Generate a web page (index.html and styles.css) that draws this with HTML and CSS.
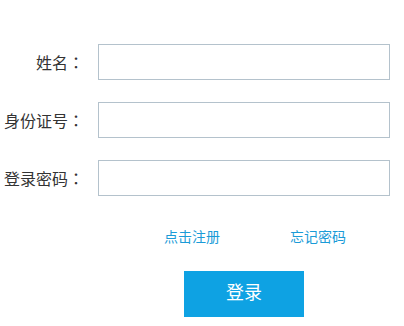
FILE: index.html
```html
<!DOCTYPE HTML>
<html>
	<head>
		<meta charset='utf-8' />
		<title>登录</title>
		<link rel="stylesheet" href="styles.css">
	</head>
	<body>
		<div class='loginForm'>
			<div class='row'>
				<label class='label'>姓名<span class='colon'>：</span></label>
				<input class='field' type='text'>
			</div>
			<div class='row'>
				<label class='label'>身份证号<span class='colon'>：</span></label>
				<input class='field' type='text'>
			</div>
			<div class='row'>
				<label class='label'>登录密码<span class='colon'>：</span></label>
				<input class='field' type='password'>
			</div>
			<div class='links'>
				<a class='reg' href='javascript:void(0)'>点击注册</a>
				<a class='forget' href='javascript:void(0)'>忘记密码</a>
			</div>
			<div class='btnRow'>
				<a class='loginBtn' href='javascript:void(0)'>登录</a>
			</div>
		</div>
	</body>
</html>
```

FILE: styles.css
```css
body,p{margin:0;}
a{text-decoration: none;}
body{
	font-family: "Liberation Sans", "Noto Sans CJK SC", sans-serif;
	background:#fff;
}
.loginForm{
	padding-top:44px;
}
.row{
	display:flex;
	align-items:center;
	margin-bottom:22px;
}
.label{
	width:84px;
	margin-right:14px;
	text-align:right;
	font-size:16px;
	color:#333;
}
.colon{
	font-family: "Noto Sans CJK TC", sans-serif;
}
.field{
	box-sizing:border-box;
	width:292px;
	height:36px;
	margin:0;
	border:1px solid #b4c2cc;
	outline:none;
	padding:0 8px;
}
.links{
	display:flex;
	padding-left:164px;
	margin-top:31px;
	font-size:14px;
	line-height:20px;
}
.links a{
	color:#1a9bd7;
}
.reg{
	margin-right:70px;
}
.btnRow{
	padding-left:184px;
	margin-top:24px;
}
.loginBtn{
	display:block;
	width:120px;
	height:46px;
	line-height:44px;
	text-align:center;
	background:#0ea2e3;
	color:#fff;
	font-size:18px;
}
```
